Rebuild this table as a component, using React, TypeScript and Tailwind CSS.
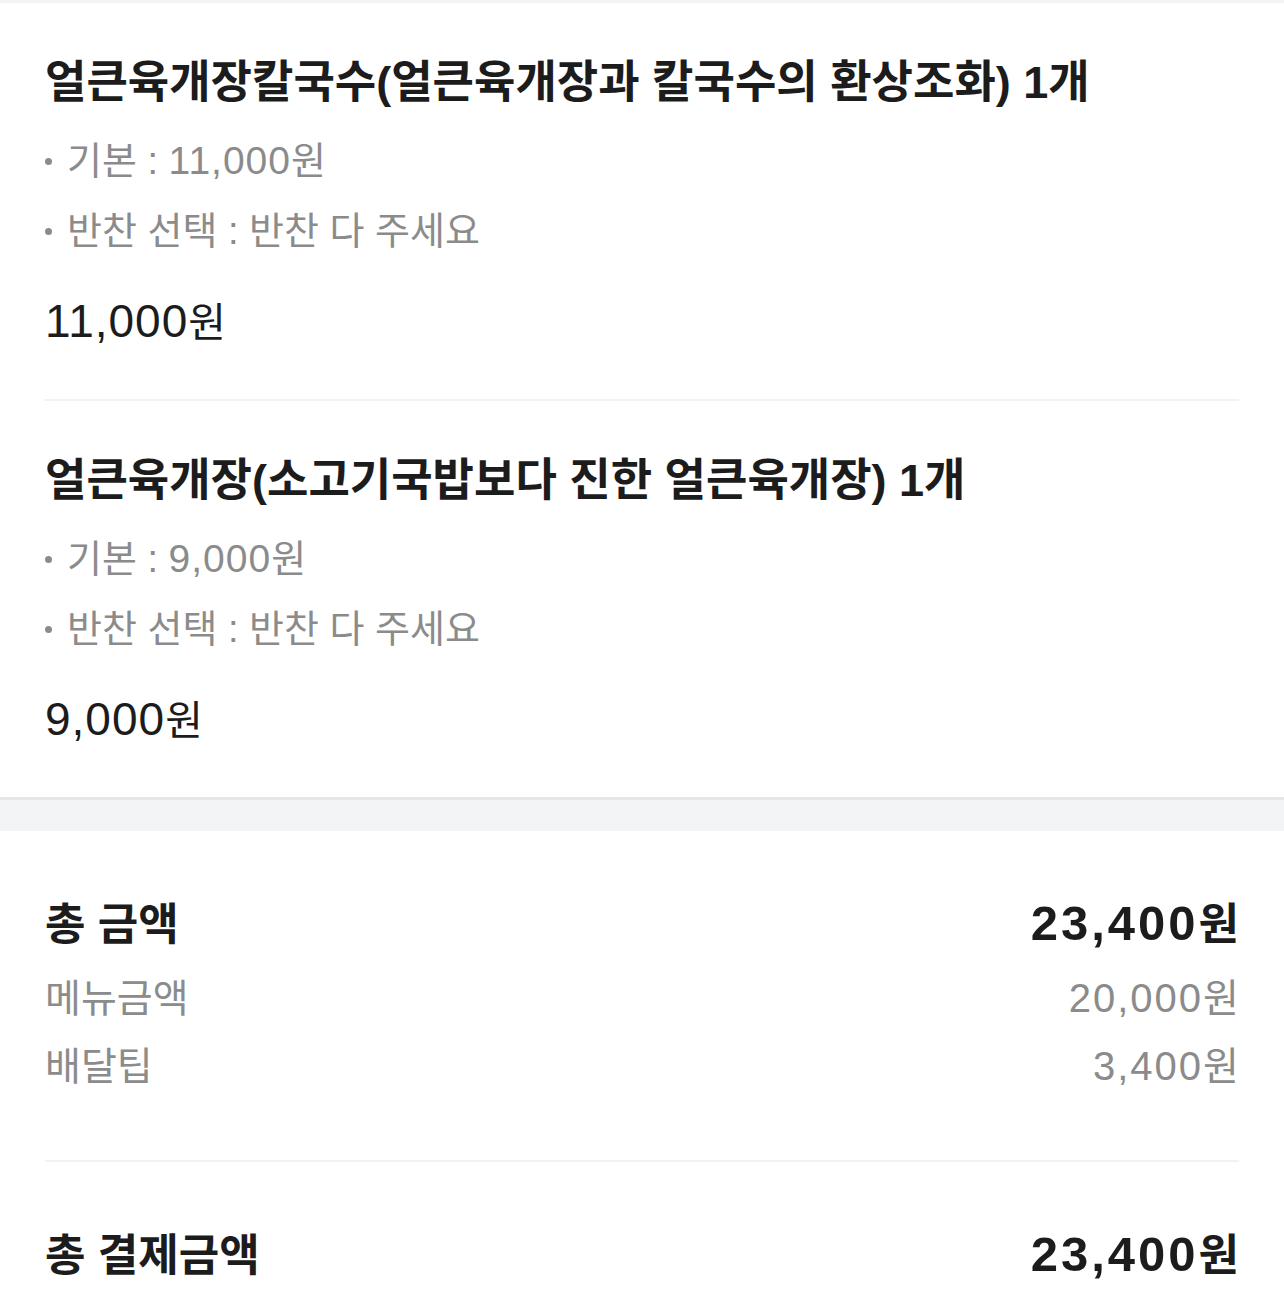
import React from 'react'

interface OrderItem {
  name: string
  base: string
  side: string
  price: string
}

const items: OrderItem[] = [
  {
    name: '얼큰육개장칼국수(얼큰육개장과 칼국수의 환상조화) 1개',
    base: '11,000',
    side: '반찬 다 주세요',
    price: '11,000',
  },
  {
    name: '얼큰육개장(소고기국밥보다 진한 얼큰육개장) 1개',
    base: '9,000',
    side: '반찬 다 주세요',
    price: '9,000',
  },
]

function Won({ value, numClass }: { value: string; numClass: string }) {
  return (
    <>
      <span className={`leading-none ${numClass}`}>{value}</span>원
    </>
  )
}

function OptionRow({ children }: { children: React.ReactNode }) {
  return (
    <div className="flex items-center h-[70px]">
      <span className="w-[7px] h-[7px] rounded-full bg-[#8b8b8b] mr-[15px] shrink-0" />
      <span>{children}</span>
    </div>
  )
}

function SummaryRow({ label, value }: { label: string; value: string }) {
  return (
    <div className="flex items-center justify-between h-[68px]">
      <span>{label}</span>
      <span>
        <Won value={value} numClass="text-[40px] tracking-[2px]" />
      </span>
    </div>
  )
}

export default function App() {
  return (
    <div className="min-h-screen bg-white text-[#1c1c1c] font-['Liberation_Sans','Noto_Sans_CJK_KR',sans-serif] border-t-[3px] border-[#f2f3f5]">
      <section className="px-[45px]">
        {items.map((item, i) => (
          <div
            key={item.name}
            className={i > 0 ? 'pt-[52px] pb-[48px] border-t-2 border-[#f2f2f2]' : 'pt-[52px] pb-[48px]'}
          >
            <h3 className="text-[45px] font-bold leading-[56px] whitespace-nowrap">{item.name}</h3>
            <div className="mt-[15px] text-[38px] text-[#8b8b8b]">
              <OptionRow>
                기본 : <Won value={item.base} numClass="text-[39px] tracking-[1px]" />
              </OptionRow>
              <OptionRow>반찬 선택 : {item.side}</OptionRow>
            </div>
            <div className="mt-[29px] text-[41px] leading-[56px]">
              <Won value={item.price} numClass="text-[46px] tracking-[1px]" />
            </div>
          </div>
        ))}
      </section>

      <div className="h-[34px] bg-[#f3f4f6] border-t-[3px] border-[#e5e6e9]" />

      <section className="px-[45px]">
        <div className="pt-[66px] pb-[59px]">
          <div className="flex items-center justify-between h-[56px] font-bold">
            <span className="text-[44px]">총 금액</span>
            <span className="text-[44px]">
              <Won value="23,400" numClass="text-[49px] tracking-[3px]" />
            </span>
          </div>
          <div className="mt-[12px] text-[39px] text-[#8b8b8b]">
            <SummaryRow label="메뉴금액" value="20,000" />
            <SummaryRow label="배달팁" value="3,400" />
          </div>
        </div>
        <div className="border-t-2 border-[#f2f2f2] pt-[66px] pb-[40px]">
          <div className="flex items-center justify-between h-[56px] font-bold">
            <span className="text-[44px]">총 결제금액</span>
            <span className="text-[44px]">
              <Won value="23,400" numClass="text-[49px] tracking-[3px]" />
            </span>
          </div>
        </div>
      </section>
    </div>
  )
}
